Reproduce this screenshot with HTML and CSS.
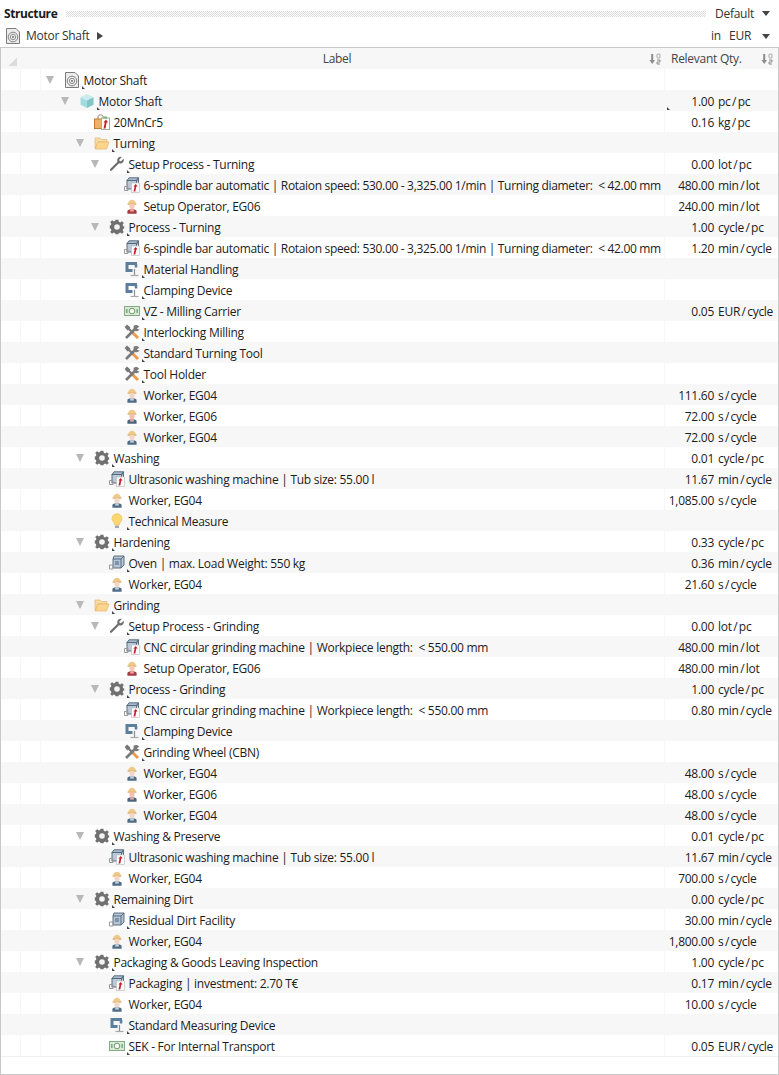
FILE: index.html
```html
<!DOCTYPE html>
<html lang="en">
<head>
<meta charset="utf-8">
<title>Structure</title>
<link rel="stylesheet" href="styles.css">
</head>
<body>
<svg class="defs" aria-hidden="true">
<symbol id="doc" viewBox="0 0 16 16"><path d="M1.5 .5H11L14.5 4V15.5H1.5Z" fill="#ececec" stroke="#7c7c7c"/><circle cx="8" cy="9" r="4.8" fill="none" stroke="#858585"/><circle cx="8" cy="9" r="2.7" fill="none" stroke="#929292"/><circle cx="8" cy="9" r="1" fill="#6e6e6e"/></symbol>
<symbol id="cube" viewBox="0 0 16 16"><path d="M8 1 14.5 4.3 8 7.6 1.5 4.3Z" fill="#c9ecec"/><path d="M1.5 4.3 8 7.6V15L1.5 11.7Z" fill="#a5dbdc"/><path d="M14.5 4.3 8 7.6V15L14.5 11.7Z" fill="#7fc6c9"/></symbol>
<symbol id="material" viewBox="0 0 16 16"><path d="M4 5V2.5C4 .4 9 .4 9 2.5V5" fill="none" stroke="#8a7a6a"/><rect x="0.5" y="5" width="8" height="9.5" fill="#eeb267" stroke="#c77d2b"/><rect x="7.5" y="4" width="8" height="11.5" fill="#fff" stroke="#9ab0a0"/><path d="M9.5 14.5 10.8 8.5H9.5L12 5.5 14 8.5H12.6L11.5 14.5Z" fill="#c8202a"/><rect x="9.5" y="2.5" width="3.5" height="2" fill="#7cb26a"/></symbol>
<symbol id="folder" viewBox="0 0 16 16"><path d="M1 3H6L7.5 4.5H13V7H4L1.5 13.5H1Z" fill="#f7dca6" stroke="#e0b66e" stroke-width=".7"/><path d="M3.8 7H15L12.5 14H1.2Z" fill="#fbd58c" stroke="#e6b468" stroke-width=".7"/></symbol>
<symbol id="wrench" viewBox="0 0 16 16"><path d="M14.6 2.7 12 5.2 10.6 4.9 10.3 3.5 12.8 1C10.7.3 8.2 1.6 8.2 4.2 8.2 4.8 8.3 5.3 8.5 5.7L1.2 13C.3 14 1.8 15.6 2.8 14.6L10 7.3C12.6 8.2 15.6 6 14.6 2.7Z" fill="#6e6e6e"/></symbol>
<symbol id="gear" viewBox="0 0 16 16"><path d="M6.6 .8H9.4L9.8 2.8 11.2 3.4 12.9 2.2 14.8 4.1 13.6 5.8 14.2 7.2 15.2 7.6V8.4 9.4L14.2 9.8 13.6 11.2 14.8 12.9 12.9 14.8 11.2 13.6 9.8 14.2 9.4 15.2H6.6L6.2 14.2 4.8 13.6 3.1 14.8 1.2 12.9 2.4 11.2 1.8 9.8.8 9.4V6.6L1.8 6.2 2.4 4.8 1.2 3.1 3.1 1.2 4.8 2.4 6.2 1.8Z" fill="#707070"/><circle cx="8" cy="8" r="2.8" fill="#f4f4f4"/></symbol>
<symbol id="machine" viewBox="0 0 16 16"><path d="M5 .8H14.5L12.5 3.5H3Z" fill="#a9bccd" stroke="#4f6377" stroke-width=".9"/><rect x="3" y="3.5" width="9.5" height="8.5" fill="#bccad7" stroke="#4f6377" stroke-width=".9"/><path d="M12.5 3.5 14.5 .8V6" fill="#8ea2b5" stroke="#4f6377" stroke-width=".9"/><path d="M.5 9.5H4V13.5H.5Z" fill="none" stroke="#9a9a9a"/><rect x="7.5" y="6" width="8" height="9.5" fill="#fff" stroke="#b0b8bd" stroke-width=".6"/><path d="M9.5 14.5 10.6 9.5H9.4L11.8 7 13.6 9.5H12.3L11.3 14.5Z" fill="#c8202a"/></symbol>
<symbol id="oven" viewBox="0 0 16 16"><path d="M5 1H15V10L12 13H4V4Z" fill="#b7c6d5" stroke="#4f6377" stroke-width=".9"/><path d="M4 4H12V13M12 4 15 1" fill="none" stroke="#4f6377" stroke-width=".9"/><rect x="6" y="6" width="4" height="4" fill="#7e93a8"/><path d="M.5 10H4V14H.5Z" fill="none" stroke="#9a9a9a"/></symbol>
<symbol id="operator" viewBox="0 0 16 16"><path d="M4 6.2C4 .2 12 .2 12 6.2Z" fill="#efc98a"/><rect x="3.5" y="5.6" width="9" height="1.1" fill="#dcae66"/><circle cx="8" cy="8.4" r="2.6" fill="#f6c9b6"/><path d="M3.4 15.8V13C3.4 10.6 12.6 10.6 12.6 13V15.8Z" fill="#a83a40"/><rect x="6.2" y="11.2" width="3.6" height="2.4" fill="#eba9a6"/></symbol>
<symbol id="worker" viewBox="0 0 16 16"><path d="M4 6.2C4 .2 12 .2 12 6.2Z" fill="#efc98a"/><rect x="3.5" y="5.6" width="9" height="1.1" fill="#dcae66"/><circle cx="8" cy="8.4" r="2.6" fill="#f3d6c6"/><path d="M3.4 15.8V13C3.4 10.6 12.6 10.6 12.6 13V15.8Z" fill="#4f6b85"/><rect x="6.2" y="11.2" width="3.6" height="2.4" fill="#c3d0da"/></symbol>
<symbol id="pink" viewBox="0 0 16 16"><path d="M4 6.2C4 .2 12 .2 12 6.2Z" fill="#efc98a"/><rect x="3.5" y="5.6" width="9" height="1.1" fill="#dcae66"/><circle cx="8" cy="8.4" r="2.6" fill="#f5bfb0"/><path d="M3.4 15.8V13C3.4 10.6 12.6 10.6 12.6 13V15.8Z" fill="#4a667f"/><rect x="6.2" y="11.2" width="3.6" height="2.4" fill="#eaa9a4"/></symbol>
<symbol id="clamp" viewBox="0 0 16 16"><path d="M13 2.4H3V9.6H8.5" fill="none" stroke="#5d7f9e" stroke-width="3"/><path d="M12 3V6.5" stroke="#5d7f9e" stroke-width="2.6"/><path d="M10.5 8V14" stroke="#8e8e8e" stroke-width="1.2"/><path d="M6.5 14.5H14.5" stroke="#a8a8a8" stroke-width="1.2"/></symbol>
<symbol id="money" viewBox="0 0 16 16"><rect x=".5" y="3.5" width="15" height="9" fill="#d9ebd6" stroke="#84ab81"/><circle cx="8" cy="8" r="2.8" fill="#f6fbf5" stroke="#6e9a6b"/><rect x="2" y="6" width="1.6" height="4" fill="#84ab81"/><rect x="12.4" y="6" width="1.6" height="4" fill="#84ab81"/></symbol>
<symbol id="tools" viewBox="0 0 16 16"><path d="M8.5 8.5 14 14" stroke="#ee9a4d" stroke-width="3"/><path d="M3 3 9 9" stroke="#7a7a7a" stroke-width="2.4"/><path d="M.6 3 3 .6 6.4 3.5 3.5 6.4Z" fill="#777"/><path d="M2 14 11 5" stroke="#7a7a7a" stroke-width="2.6"/><path d="M9.6 1.8C11.5.4 14 .8 15.2 2.8L12.8 4.4 15.6 5.8C13.8 7.8 11 7.6 9.6 5.4Z" fill="#7a7a7a"/></symbol>
<symbol id="bulb" viewBox="0 0 16 16"><path d="M8 .8C4.6.8 3 3.2 3 5.6 3 8.2 5.4 9.6 5.8 12H10.2C10.6 9.6 13 8.2 13 5.6 13 3.2 11.4.8 8 .8Z" fill="#f9d773" stroke="#eebd4a" stroke-width=".6"/><rect x="6" y="12.4" width="4" height="2.6" rx=".6" fill="#a9a9a9"/></symbol>
<symbol id="sort" viewBox="0 0 12 12"><path d="M3.2 1V8" stroke="#8c8c8c" stroke-width="2"/><path d="M.5 7H6L3.2 11Z" fill="#8c8c8c"/><rect x="8" y="1" width="3" height="4" rx="1" fill="none" stroke="#a6a6a6"/><path d="M8 7H11V9H8V11H11" fill="none" stroke="#8c8c8c"/></symbol>
</svg>

<header class="bar bar-title">
  <strong class="title">Structure</strong>
  <span class="dots"></span>
  <span class="select">Default</span>
  <span class="caret"></span>
</header>
<div class="bar bar-crumb">
  <svg class="ic crumb-ic"><use href="#doc"/></svg>
  <span class="crumb">Motor Shaft</span>
  <span class="next"></span>
  <span class="spacer"></span>
  <span class="in">in</span>
  <span class="select">EUR</span>
  <span class="caret"></span>
</div>

<main class="table">
  <div class="head">
    <div class="head-label"><span class="corner"></span><span class="head-text">Label</span><svg class="sort"><use href="#sort"/></svg></div>
    <div class="head-qty"><span>Relevant Qty.</span><svg class="sort"><use href="#sort"/></svg></div>
  </div>
  <div class="rows">
    <div class="row l0"><i class="exp"></i><svg class="ic"><use href="#doc"/></svg><span class="t m">Motor Shaft</span><span class="q"></span></div>
    <div class="row l1"><i class="exp"></i><svg class="ic"><use href="#cube"/></svg><span class="t m">Motor Shaft</span><span class="q stray"><b>1.00</b><span>pc<s>/</s>pc</span></span></div>
    <div class="row l2"><i class="leaf"></i><svg class="ic"><use href="#material"/></svg><span class="t">20MnCr5</span><span class="q"><b>0.16</b><span>kg<s>/</s>pc</span></span></div>
    <div class="row l2"><i class="exp"></i><svg class="ic"><use href="#folder"/></svg><span class="t m">Turning</span><span class="q"></span></div>
    <div class="row l3"><i class="exp"></i><svg class="ic"><use href="#wrench"/></svg><span class="t m">Setup Process - Turning</span><span class="q"><b>0.00</b><span>lot<s>/</s>pc</span></span></div>
    <div class="row l4"><i class="leaf"></i><svg class="ic"><use href="#machine"/></svg><span class="t long">6-spindle bar automatic | Rotaion speed: 530.00 - 3,325.00 1/min | Turning diameter: &nbsp;&lt; 42.00 mm</span><span class="q"><b>480.00</b><span>min<s>/</s>lot</span></span></div>
    <div class="row l4"><i class="leaf"></i><svg class="ic"><use href="#operator"/></svg><span class="t">Setup Operator, EG06</span><span class="q"><b>240.00</b><span>min<s>/</s>lot</span></span></div>
    <div class="row l3"><i class="exp"></i><svg class="ic"><use href="#gear"/></svg><span class="t m">Process - Turning</span><span class="q"><b>1.00</b><span>cycle<s>/</s>pc</span></span></div>
    <div class="row l4"><i class="leaf"></i><svg class="ic"><use href="#machine"/></svg><span class="t long">6-spindle bar automatic | Rotaion speed: 530.00 - 3,325.00 1/min | Turning diameter: &nbsp;&lt; 42.00 mm</span><span class="q"><b>1.20</b><span>min<s>/</s>cycle</span></span></div>
    <div class="row l4"><i class="leaf"></i><svg class="ic"><use href="#clamp"/></svg><span class="t m">Material Handling</span><span class="q"></span></div>
    <div class="row l4"><i class="leaf"></i><svg class="ic"><use href="#clamp"/></svg><span class="t m">Clamping Device</span><span class="q"></span></div>
    <div class="row l4"><i class="leaf"></i><svg class="ic"><use href="#money"/></svg><span class="t m">VZ - Milling Carrier</span><span class="q"><b>0.05</b><span>EUR<s>/</s>cycle</span></span></div>
    <div class="row l4"><i class="leaf"></i><svg class="ic"><use href="#tools"/></svg><span class="t m">Interlocking Milling</span><span class="q"></span></div>
    <div class="row l4"><i class="leaf"></i><svg class="ic"><use href="#tools"/></svg><span class="t m">Standard Turning Tool</span><span class="q"></span></div>
    <div class="row l4"><i class="leaf"></i><svg class="ic"><use href="#tools"/></svg><span class="t m">Tool Holder</span><span class="q"></span></div>
    <div class="row l4"><i class="leaf"></i><svg class="ic"><use href="#worker"/></svg><span class="t">Worker, EG04</span><span class="q"><b>111.60</b><span>s<s>/</s>cycle</span></span></div>
    <div class="row l4"><i class="leaf"></i><svg class="ic"><use href="#pink"/></svg><span class="t">Worker, EG06</span><span class="q"><b>72.00</b><span>s<s>/</s>cycle</span></span></div>
    <div class="row l4"><i class="leaf"></i><svg class="ic"><use href="#worker"/></svg><span class="t">Worker, EG04</span><span class="q"><b>72.00</b><span>s<s>/</s>cycle</span></span></div>
    <div class="row l2"><i class="exp"></i><svg class="ic"><use href="#gear"/></svg><span class="t m">Washing</span><span class="q"><b>0.01</b><span>cycle<s>/</s>pc</span></span></div>
    <div class="row l3"><i class="leaf"></i><svg class="ic"><use href="#machine"/></svg><span class="t">Ultrasonic washing machine | Tub size: 55.00 l</span><span class="q"><b>11.67</b><span>min<s>/</s>cycle</span></span></div>
    <div class="row l3"><i class="leaf"></i><svg class="ic"><use href="#worker"/></svg><span class="t">Worker, EG04</span><span class="q"><b>1,085.00</b><span>s<s>/</s>cycle</span></span></div>
    <div class="row l3"><i class="leaf"></i><svg class="ic"><use href="#bulb"/></svg><span class="t m">Technical Measure</span><span class="q"></span></div>
    <div class="row l2"><i class="exp"></i><svg class="ic"><use href="#gear"/></svg><span class="t m">Hardening</span><span class="q"><b>0.33</b><span>cycle<s>/</s>pc</span></span></div>
    <div class="row l3"><i class="leaf"></i><svg class="ic"><use href="#oven"/></svg><span class="t m">Oven | max. Load Weight: 550 kg</span><span class="q"><b>0.36</b><span>min<s>/</s>cycle</span></span></div>
    <div class="row l3"><i class="leaf"></i><svg class="ic"><use href="#worker"/></svg><span class="t">Worker, EG04</span><span class="q"><b>21.60</b><span>s<s>/</s>cycle</span></span></div>
    <div class="row l2"><i class="exp"></i><svg class="ic"><use href="#folder"/></svg><span class="t m">Grinding</span><span class="q"></span></div>
    <div class="row l3"><i class="exp"></i><svg class="ic"><use href="#wrench"/></svg><span class="t m">Setup Process - Grinding</span><span class="q"><b>0.00</b><span>lot<s>/</s>pc</span></span></div>
    <div class="row l4"><i class="leaf"></i><svg class="ic"><use href="#machine"/></svg><span class="t">CNC circular grinding machine | Workpiece length: &nbsp;&lt; 550.00 mm</span><span class="q"><b>480.00</b><span>min<s>/</s>lot</span></span></div>
    <div class="row l4"><i class="leaf"></i><svg class="ic"><use href="#operator"/></svg><span class="t">Setup Operator, EG06</span><span class="q"><b>480.00</b><span>min<s>/</s>lot</span></span></div>
    <div class="row l3"><i class="exp"></i><svg class="ic"><use href="#gear"/></svg><span class="t m">Process - Grinding</span><span class="q"><b>1.00</b><span>cycle<s>/</s>pc</span></span></div>
    <div class="row l4"><i class="leaf"></i><svg class="ic"><use href="#machine"/></svg><span class="t">CNC circular grinding machine | Workpiece length: &nbsp;&lt; 550.00 mm</span><span class="q"><b>0.80</b><span>min<s>/</s>cycle</span></span></div>
    <div class="row l4"><i class="leaf"></i><svg class="ic"><use href="#clamp"/></svg><span class="t m">Clamping Device</span><span class="q"></span></div>
    <div class="row l4"><i class="leaf"></i><svg class="ic"><use href="#tools"/></svg><span class="t m">Grinding Wheel (CBN)</span><span class="q"></span></div>
    <div class="row l4"><i class="leaf"></i><svg class="ic"><use href="#worker"/></svg><span class="t">Worker, EG04</span><span class="q"><b>48.00</b><span>s<s>/</s>cycle</span></span></div>
    <div class="row l4"><i class="leaf"></i><svg class="ic"><use href="#pink"/></svg><span class="t">Worker, EG06</span><span class="q"><b>48.00</b><span>s<s>/</s>cycle</span></span></div>
    <div class="row l4"><i class="leaf"></i><svg class="ic"><use href="#worker"/></svg><span class="t">Worker, EG04</span><span class="q"><b>48.00</b><span>s<s>/</s>cycle</span></span></div>
    <div class="row l2"><i class="exp"></i><svg class="ic"><use href="#gear"/></svg><span class="t m">Washing &amp; Preserve</span><span class="q"><b>0.01</b><span>cycle<s>/</s>pc</span></span></div>
    <div class="row l3"><i class="leaf"></i><svg class="ic"><use href="#machine"/></svg><span class="t">Ultrasonic washing machine | Tub size: 55.00 l</span><span class="q"><b>11.67</b><span>min<s>/</s>cycle</span></span></div>
    <div class="row l3"><i class="leaf"></i><svg class="ic"><use href="#worker"/></svg><span class="t">Worker, EG04</span><span class="q"><b>700.00</b><span>s<s>/</s>cycle</span></span></div>
    <div class="row l2"><i class="exp"></i><svg class="ic"><use href="#gear"/></svg><span class="t m">Remaining Dirt</span><span class="q"><b>0.00</b><span>cycle<s>/</s>pc</span></span></div>
    <div class="row l3"><i class="leaf"></i><svg class="ic"><use href="#oven"/></svg><span class="t m">Residual Dirt Facility</span><span class="q"><b>30.00</b><span>min<s>/</s>cycle</span></span></div>
    <div class="row l3"><i class="leaf"></i><svg class="ic"><use href="#worker"/></svg><span class="t">Worker, EG04</span><span class="q"><b>1,800.00</b><span>s<s>/</s>cycle</span></span></div>
    <div class="row l2"><i class="exp"></i><svg class="ic"><use href="#gear"/></svg><span class="t m">Packaging &amp; Goods Leaving Inspection</span><span class="q"><b>1.00</b><span>cycle<s>/</s>pc</span></span></div>
    <div class="row l3"><i class="leaf"></i><svg class="ic"><use href="#machine"/></svg><span class="t">Packaging | investment: 2.70 T€</span><span class="q"><b>0.17</b><span>min<s>/</s>cycle</span></span></div>
    <div class="row l3"><i class="leaf"></i><svg class="ic"><use href="#worker"/></svg><span class="t">Worker, EG04</span><span class="q"><b>10.00</b><span>s<s>/</s>cycle</span></span></div>
    <div class="row l3"><i class="leaf"></i><svg class="ic"><use href="#clamp"/></svg><span class="t m">Standard Measuring Device</span><span class="q"></span></div>
    <div class="row l3"><i class="leaf"></i><svg class="ic"><use href="#money"/></svg><span class="t m">SEK - For Internal Transport</span><span class="q"><b>0.05</b><span>EUR<s>/</s>cycle</span></span></div>
  </div>
</main>
</body>
</html>
```
FILE: styles.css
```css
* { box-sizing: border-box; }
html, body { margin: 0; height: 1075px; overflow: hidden; background: #fff; }
body {
  font: 12px/16px "Open Sans", "Noto Sans", sans-serif;
  letter-spacing: -0.27px;
  color: #1c1c1c;
  display: flex;
  flex-direction: column;
}
.defs { width: 0; height: 0; display: none; }

.bar { display: flex; align-items: center; flex: none; padding-right: 9px; }
.bar-title { height: 24px; padding-top: 3px; }
.bar-crumb { height: 23px; padding-left: 5px; padding-top: 1px; }
.title { font-weight: 700; color: #1a1a1a; padding-left: 4px; width: 66px; letter-spacing: -0.4px; }
.dots {
  flex: 1;
  height: 6px;
  margin: 0 9px 0 0;
  background: repeating-conic-gradient(#dcdcdc 0 25%, #fff 0 50%) 0 0 / 2px 2px;
}
.select { color: #333; width: 47px; }
.caret { width: 0; height: 0; border: 4px solid transparent; border-top: 5px solid #444; border-bottom: 0; }
.ic { width: 16px; height: 16px; flex: none; }
.crumb { margin-left: 5px; color: #333; }
.next { width: 0; height: 0; margin-left: 8px; border: 4px solid transparent; border-left: 6px solid #444; border-right: 0; }
.spacer { flex: 1; }
.in { width: 18px; color: #333; }
.bar-crumb .select { width: 33px; }

.table {
  flex: none;
  height: 1028px;
  border: 1px solid #c8c8c8;
  display: flex;
  flex-direction: column;
}
.head { height: 21px; flex: none; display: flex; background: #f7f7f7; color: #444; align-items: center; padding-top: 1px; }
.head-label { width: 664px; display: flex; align-items: center; padding-left: 8px; padding-right: 4px; }
.corner { width: 8px; height: 8px; margin-top: 6px; background: linear-gradient(135deg, transparent 50%, #dcdcdc 50%); }
.head-text { flex: 1; text-align: center; padding-left: 8px; }
.head-qty { flex: 1; display: flex; align-items: center; justify-content: space-between; padding-left: 6px; padding-right: 5px; }
.sort { width: 12px; height: 12px; flex: none; }

.rows { border-bottom: 1px solid #f0f0f0; }
.row {
  height: 21px;
  display: flex;
  align-items: center;
  background:
    linear-gradient(#f7f7f7, #f7f7f7) 19px 0 / 1px 100% no-repeat,
    linear-gradient(#f7f7f7, #f7f7f7) 39px 0 / 1px 100% no-repeat,
    linear-gradient(#f7f7f7, #f7f7f7) 663px 0 / 1px 100% no-repeat,
    #fff;
}
.row:nth-child(even) { background: #f7f7f7; }
.l0 { padding-left: 45px; }
.l1 { padding-left: 60px; }
.l2 { padding-left: 75px; }
.l3 { padding-left: 90px; }
.l4 { padding-left: 105px; }
.leaf { width: 18px; flex: none; }
.exp { flex: none; width: 8px; height: 0; margin-right: 10px; border-top: 8px solid #b8b8b8; border-left: 4px solid transparent; border-right: 4px solid transparent; }
.t { flex: 1; min-width: 0; margin-left: 3.5px; padding-top: 2px; white-space: nowrap; position: relative; }
.long { letter-spacing: -0.32px; }
.m::before {
  content: "";
  position: absolute;
  left: -2px;
  bottom: 0;
  border-bottom: 3px solid #444;
  border-right: 3px solid transparent;
}
.q {
  flex: none;
  width: 113px;
  padding-top: 2px;
  display: flex;
  gap: 4px;
  position: relative;
}
.q b { flex: none; width: 49px; font-weight: 400; text-align: right; }
.q span { white-space: nowrap; }
.q s { text-decoration: none; margin: 0 1.5px; }
.stray::before {
  content: "";
  position: absolute;
  left: 2px;
  bottom: 0;
  border-bottom: 3px solid #444;
  border-right: 3px solid transparent;
}
```
